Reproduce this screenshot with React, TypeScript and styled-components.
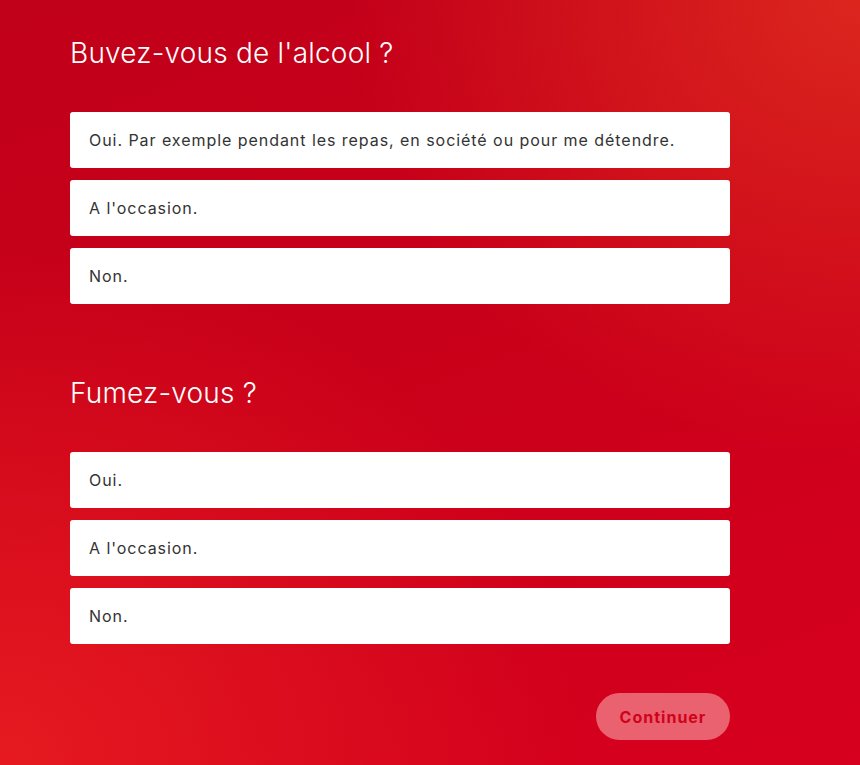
import React from "react";
import styled, { createGlobalStyle } from "styled-components";

const Global = createGlobalStyle`
  html, body { margin: 0; padding: 0; }
  body { font-family: "Inter", "Noto Sans", sans-serif; }
  * { box-sizing: border-box; }
`;

const Page = styled.div`
  min-height: 765px;
  width: 100%;
  background:
    radial-gradient(ellipse at 100% 0%, rgba(222, 42, 30, 0.9) 0%, rgba(222, 42, 30, 0) 42%),
    radial-gradient(ellipse at 0% 100%, rgba(230, 26, 32, 1) 0%, rgba(230, 26, 32, 0) 48%),
    linear-gradient(160deg, #c1001a 0%, #c90019 45%, #d7001e 100%);
  padding: 36px 0 0 70px;
`;

const Form = styled.div`
  width: 660px;
  display: flex;
  flex-direction: column;
`;

const Section = styled.section`
  display: flex;
  flex-direction: column;
  & + & {
    margin-top: 72px;
  }
`;

const Heading = styled.h2`
  margin: 0 0 42px 0;
  font-weight: 300;
  font-size: 28px;
  line-height: 34px;
  color: #ffffff;
  letter-spacing: 0.2px;
`;

const Options = styled.div`
  display: flex;
  flex-direction: column;
  gap: 12px;
`;

const Option = styled.button`
  height: 56px;
  width: 100%;
  background: #ffffff;
  border: none;
  border-radius: 3px;
  padding: 0 0 0 19px;
  text-align: left;
  font-family: "Inter", "Noto Sans", sans-serif;
  font-size: 16px;
  font-weight: 400;
  color: #333333;
  letter-spacing: 0.95px;
  cursor: pointer;
`;

const Footer = styled.div`
  display: flex;
  justify-content: flex-end;
  margin-top: 49px;
`;

const Continue = styled.button`
  width: 134px;
  height: 47px;
  border: none;
  border-radius: 24px;
  background: #ea6270;
  color: #d0021b;
  font-family: "Inter", "Noto Sans", sans-serif;
  font-weight: 700;
  font-size: 16px;
  letter-spacing: 1px;
  padding: 0;
`;

const questions = [
  {
    title: "Buvez-vous de l'alcool ?",
    options: [
      "Oui. Par exemple pendant les repas, en société ou pour me détendre.",
      "A l'occasion.",
      "Non.",
    ],
  },
  {
    title: "Fumez-vous ?",
    options: ["Oui.", "A l'occasion.", "Non."],
  },
];

export default function App() {
  return (
    <>
      <Global />
      <Page>
        <Form>
          {questions.map((q) => (
            <Section key={q.title}>
              <Heading>{q.title}</Heading>
              <Options>
                {q.options.map((o) => (
                  <Option key={o}>{o}</Option>
                ))}
              </Options>
            </Section>
          ))}
          <Footer>
            <Continue>Continuer</Continue>
          </Footer>
        </Form>
      </Page>
    </>
  );
}
